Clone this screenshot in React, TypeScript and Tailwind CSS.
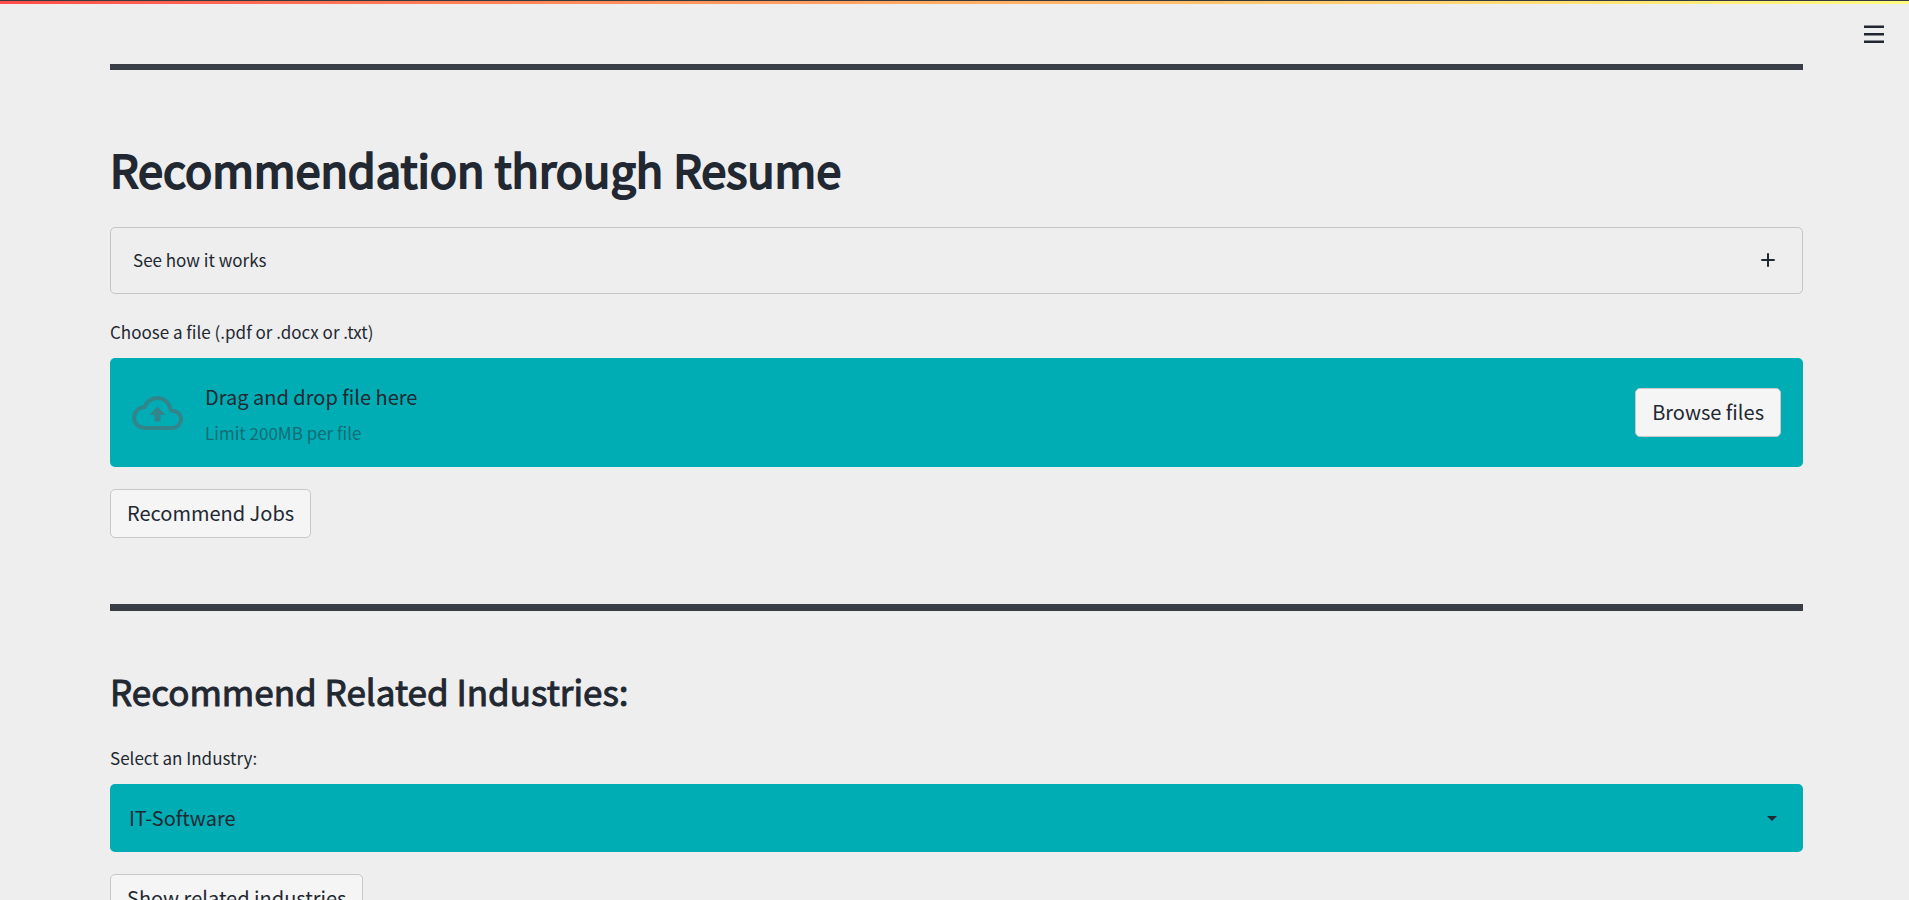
import { useRef } from "react";

const buttonClass =
  "h-[49px] rounded-[5px] border border-[#c8c8c8] bg-[#f5f5f5] px-4 pb-[2px] text-[20px] leading-[30px] whitespace-nowrap";
const labelClass = "block text-[17px] leading-[26px]";

function Divider({ className }: { className: string }) {
  return <hr className={`border-0 bg-[#393e46] ${className}`} />;
}

function CloudUpload() {
  return (
    <svg viewBox="0 0 51 34" className="h-[34px] w-[51px] shrink-0" aria-hidden="true">
      <path
        d="M13.500 32C7 32 2 27.500 2 21.500C2 16 6.500 11.500 12.500 11C15 5.500 19.500 2 25.500 2C32 2 37.500 6.500 39 14.500C44.500 14.500 49 18 49 23C49 28 45 32 40 32Z"
        fill="none"
        stroke="#31858b"
        strokeWidth="4"
      />
      <path d="M25.500 10.500L34 19H28.500V25.500H22.500V19H17Z" fill="#31858b" />
    </svg>
  );
}

export default function App() {
  const fileInput = useRef<HTMLInputElement>(null);

  return (
    <div className="h-screen overflow-y-auto bg-[#eeeeee] font-['Noto_Sans_CJK_SC',sans-serif] text-[#222831] [scrollbar-width:none]">
      <div className="h-px bg-[#3a3a3a]" />
      <div className="h-[3px] bg-linear-to-r from-[#ff4b4b] to-[#fffd80]" />
      <header className="flex h-[60px] items-center justify-end pr-5">
        <button type="button" aria-label="Main menu" className="flex size-[30px] items-center justify-center">
          <svg viewBox="0 0 20 18" className="h-[18px] w-5" fill="currentColor" aria-hidden="true">
            <path d="M0 .5H20V3H0ZM0 8H20V10.500H0ZM0 15.500H20V18H0Z" />
          </svg>
        </button>
      </header>

      <main className="pr-[106px] pb-16 pl-[110px]">
        <Divider className="h-[6px]" />

        <h1 className="mt-[69px] text-[45px] leading-[60px] font-normal [-webkit-text-stroke:2px_currentColor]">
          Recommendation through Resume
        </h1>
        <button
          type="button"
          aria-expanded="false"
          className="mt-7 flex h-[67px] w-full items-center justify-between rounded-[5px] border border-[#c5c5c5] pr-[23px] pb-[2px] pl-[22px] text-[17px] leading-[26px]"
        >
          <span>See how it works</span>
          <svg viewBox="0 0 22 22" className="size-[22px]" fill="none" stroke="currentColor" strokeWidth="2" aria-hidden="true">
            <path d="M11 4.300V17.700M4.300 11H17.700" />
          </svg>
        </button>

        <label htmlFor="resume" className={`mt-[25px] ${labelClass}`}>
          Choose a file (.pdf or .docx or .txt)
        </label>
        <div className="mt-[13px] flex h-[109px] items-center justify-between rounded-[5px] bg-[#00adb5] px-[22px]">
          <div className="flex items-center gap-[22px]">
            <CloudUpload />
            <div className="pt-1">
              <p className="text-[20px] leading-[36px]">Drag and drop file here</p>
              <p className="text-[17px] leading-[36px] text-[#146c74]">Limit 200MB per file</p>
            </div>
          </div>
          <input ref={fileInput} id="resume" type="file" accept=".pdf,.docx,.txt" className="hidden" />
          <button type="button" className={buttonClass} onClick={() => fileInput.current?.click()}>
            Browse files
          </button>
        </div>
        <button type="button" className={`mt-[22px] ${buttonClass}`}>
          Recommend Jobs
        </button>

        <Divider className="mt-[66px] h-[7px]" />

        <h2 className="mt-[56px] text-[35px] leading-[48px] font-normal [-webkit-text-stroke:1px_currentColor]">
          Recommend Related Industries:
        </h2>
        <label htmlFor="industry" className={`mt-[30px] ${labelClass}`}>
          Select an Industry:
        </label>
        <div className="mt-[13px] grid items-center">
          <select
            id="industry"
            className="col-start-1 row-start-1 h-[68px] w-full appearance-none rounded-[5px] bg-[#00adb5] px-[19px] text-[20px]"
          >
            <option>IT-Software</option>
          </select>
          <svg
            viewBox="0 0 10 5"
            className="pointer-events-none col-start-1 row-start-1 mr-[26px] h-[5px] w-[10px] justify-self-end"
            fill="currentColor"
            aria-hidden="true"
          >
            <path d="M0 0H10L5 5Z" />
          </svg>
        </div>
        <button type="button" className={`mt-[22px] ${buttonClass}`}>
          Show related industries
        </button>
      </main>
    </div>
  );
}
